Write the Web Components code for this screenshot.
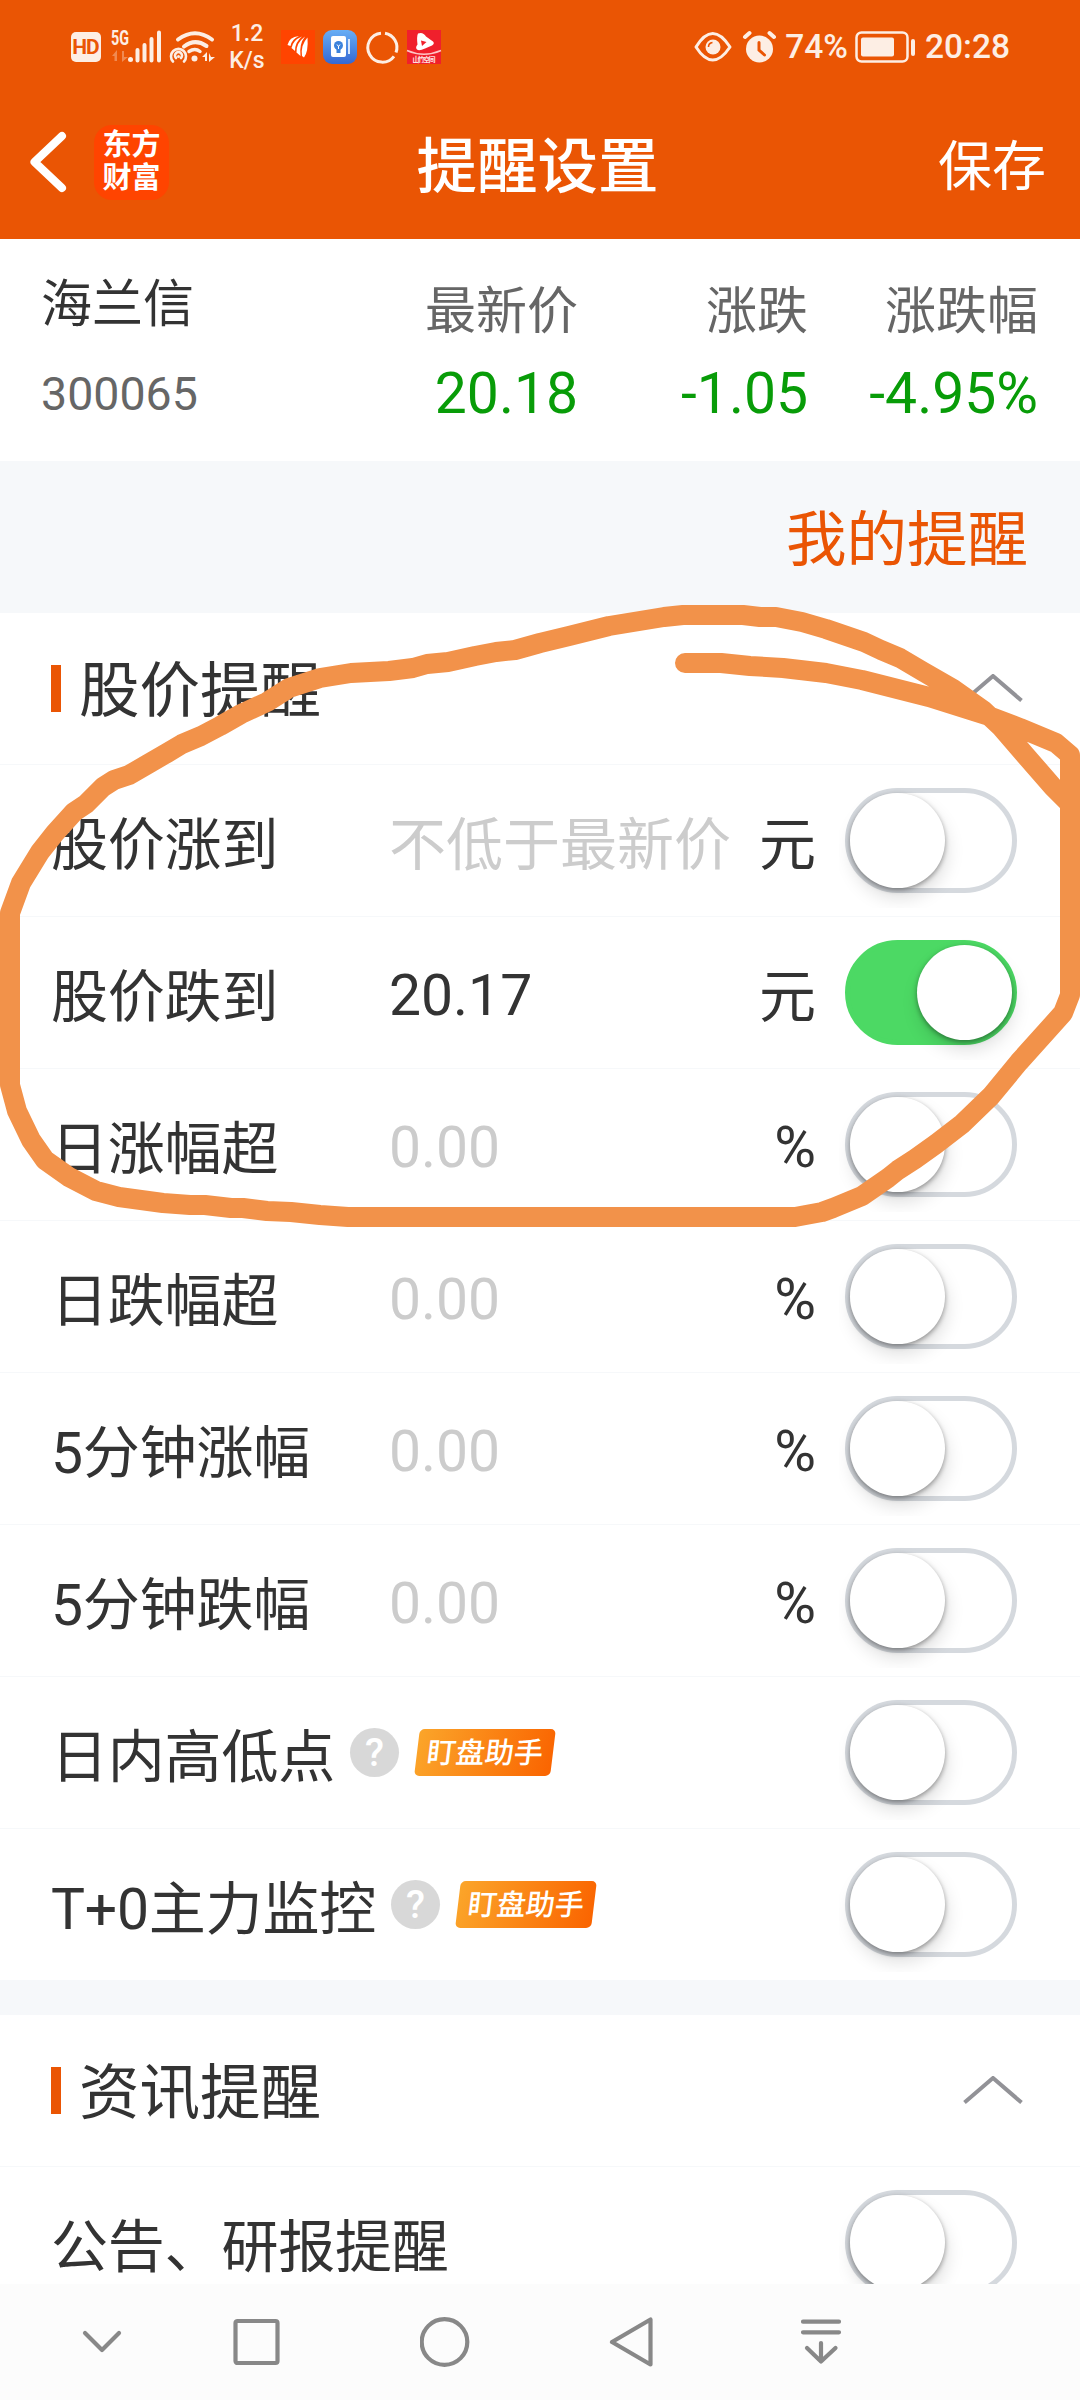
<!DOCTYPE html>
<html lang="zh-CN">
<head>
<meta charset="UTF-8">
<meta name="viewport" content="width=device-width, initial-scale=1.0">
<title>提醒设置</title>
<style>
    html, body {
        margin: 0;
        padding: 0;
    }
    body {
        width: 1080px;
        height: 2400px;
        overflow: hidden;
        background: #ffffff;
        color: #333333;
        font-family: Roboto, "Noto Sans CJK SC", sans-serif;
    }
</style>
</head>
<body>
<alert-app></alert-app>

<script>
class StatusBar extends HTMLElement {
    constructor() {
        super();
        this.attachShadow({ mode: 'open' });
    }

    connectedCallback() {
        this.shadowRoot.innerHTML = `
            <style>
                :host {
                    display: flex;
                    align-items: center;
                    justify-content: space-between;
                    height: 94px;
                    padding: 0 71px;
                    color: #fdeee4;
                    font-size: 33.500px;
                    font-weight: 500;
                    line-height: 1;
                }
                .side { display: flex; align-items: center; }
                svg { display: block; overflow: visible; }
                .hd {
                    width: 30px;
                    height: 30px;
                    border-radius: 5px;
                    background: #fdeee4;
                    color: #ea5504;
                    font-size: 21px;
                    font-weight: 700;
                    line-height: 31px;
                    text-align: center;
                    letter-spacing: -1px;
                    text-indent: -1px;
                }
                .signal { margin-left: 10px; }
                .wifi { margin-left: 9px; }
                .speed {
                    width: 36px;
                    margin-left: 13px;
                    font-size: 23px;
                    line-height: 27px;
                    text-align: center;
                }
                .apps { display: flex; gap: 8px; margin-left: 16px; }
                .alarm { margin: 0 9px 0 11px; }
                .battery { margin: 0 9px 0 7px; }
                .time { margin-right: -1px; }
            </style>
            <div class="side">
                <div class="hd">HD</div>
                <svg class="signal" width="50" height="34" viewBox="0 0 50 34" fill="#fdeee4">
                    <text x="0" y="14.500" font-size="20" font-weight="700" textLength="18" lengthAdjust="spacingAndGlyphs">5G</text>
                    <path d="M6 20v11H3.500v-5H1zM11 32V21h2v6h4z" opacity=".35"/>
                    <circle cx="19.500" cy="29.500" r="2.500"/>
                    <path d="M26.500 20v10.500M33.500 15v15.500M40.500 9v21.500M48 2.500v28" stroke="#fdeee4" stroke-width="4" stroke-linecap="round"/>
                </svg>
                <svg class="wifi" width="46" height="34" viewBox="0 0 46 34" fill="none" stroke="#fdeee4" stroke-linecap="round">
                    <path d="M8 9.500Q25-3 42 9.500" stroke-width="4"/>
                    <path d="M14 16.500Q25 8 36.500 16" stroke-width="4"/>
                    <path d="M19 21.500q6-4 11 0" stroke-width="3.500"/>
                    <path d="M3 31.500a7.500 7.500 0 1 1 11 0M6 28a3.500 3.500 0 1 1 5 0" stroke-width="2.600"/>
                    <circle cx="8.500" cy="26.500" r="1.500" fill="#fdeee4" stroke="none"/>
                    <circle cx="24.500" cy="28.500" r="3" fill="#fdeee4" stroke="none"/>
                    <path d="M37 22v9h-2v-4h-3zM39 32v-9l2 4h4z" fill="#fdeee4" stroke="none"/>
                </svg>
                <div class="speed">1.2 K/s</div>
                <div class="apps">
                    <svg width="34" height="34" viewBox="0 0 34 34">
                        <path fill="#ff4400" d="M0 0h34v34H0z"/>
                        <path fill="#fff" d="M18 6Q8 7 6.500 15l3 1Q10.500 9.500 18 6zM21 6.500Q12 10 10.500 18l3.500 3Q14 12 21 6.500zM24 6.500Q15 13 15.500 22.500l4 3.500Q18 14 24 6.500zM26.500 7.500Q19.500 15 21 26l2 1.500q4.500-6 3.500-20z"/>
                    </svg>
                    <svg width="34" height="34" viewBox="0 0 34 34">
                        <defs><linearGradient id="b" x2="0" y2="1"><stop stop-color="#67aef5"/><stop offset="1" stop-color="#3468d4"/></linearGradient></defs>
                        <rect width="34" height="34" rx="9" fill="url(#b)"/>
                        <rect x="8" y="6" width="15" height="21" rx="2" fill="#fff"/>
                        <path d="M26 9v15" stroke="#d6e6fc" stroke-width="2"/>
                        <circle cx="15.500" cy="15.500" r="4.500" fill="#3b82dc"/>
                        <path d="M13.500 19h4v4h-4z" fill="#3b82dc"/>
                        <path d="M14 14.500l1.500 2 1.500-2M15.500 16v3" fill="none" stroke="#fff"/>
                    </svg>
                    <svg width="34" height="34" viewBox="0 0 34 34" fill="none" stroke="#fdeee4" stroke-width="3">
                        <path d="M19.500 2.700A14.500 14.500 0 0 1 30.500 22M28.500 25.800A14.500 14.500 0 1 1 15.500 2.700" transform="translate(.500 .500)"/>
                    </svg>
                    <svg width="34" height="34" viewBox="0 0 34 34">
                        <path fill="#f0202c" d="M0 0h34v34H0z"/>
                        <path d="M0 20.500Q17 28 34 20.500" fill="none" stroke="#ffc5c5" stroke-width="1.500"/>
                        <path d="M11 3.500q5-2 8 3l7 5q2 2-1 4l-7 3q-6 3-8 1-2-2 .500-5-1-8 .500-11z" fill="#fff"/>
                        <path d="M14 10.500l5.500 1.500-4.500 4z" fill="#f0202c"/>
                        <text x="17" y="31.500" fill="#ffe0e0" font-size="7" font-weight="700" text-anchor="middle" textLength="23">山竹空间</text>
                    </svg>
                </div>
            </div>
            <div class="side">
                <svg width="38" height="30" viewBox="0 0 38 30" fill="none" stroke="#fdeee4" stroke-width="3">
                    <path d="M2 15Q18.500-12 36 15Q18.500 41 2 15z" stroke-linejoin="round"/>
                    <circle cx="19" cy="15" r="7.500" fill="#fdeee4" stroke="none"/>
                    <path d="M14.500 15q0-4 4-4.500" stroke="#ea5504" stroke-width="1.600"/>
                </svg>
                <svg class="alarm" width="33" height="32" viewBox="0 0 33 32" fill="none" stroke-linecap="round">
                    <circle cx="16.500" cy="18" r="13.500" fill="#fdeee4"/>
                    <path d="M2 6l4.500-4M31 6l-4.500-4" stroke="#fdeee4" stroke-width="4"/>
                    <path d="M16 11.500V19l5.500 5" stroke="#ea5504" stroke-width="3"/>
                </svg>
                <span>74%</span>
                <svg class="battery" width="61" height="32" viewBox="0 0 61 32" fill="none">
                    <rect x="1.500" y="1.500" width="51" height="29" rx="5" stroke="#fdeee4" stroke-width="2.500"/>
                    <rect x="6" y="6.500" width="33" height="19" rx="2" fill="#fdeee4"/>
                    <rect x="56" y="8" width="4" height="17" rx="2" fill="#fdeee4"/>
                </svg>
                <span class="time">20:28</span>
            </div>
        `;
    }
}

class AppHeader extends HTMLElement {
    constructor() {
        super();
        this.attachShadow({ mode: 'open' });
    }

    connectedCallback() {
        this.shadowRoot.innerHTML = `
            <style>
                :host {
                    display: block;
                    height: 239px;
                    background: #ea5504;
                    color: #ffffff;
                }
                header {
                    display: grid;
                    grid-template-columns: 1fr auto 1fr;
                    align-items: center;
                    height: 140px;
                    padding: 0 34px 0 29px;
                }
                .left { display: flex; align-items: center; gap: 27px; padding-bottom: 4px; }
                .logo {
                    display: flex;
                    flex-direction: column;
                    justify-content: center;
                    width: 75px;
                    height: 75px;
                    border-radius: 18px;
                    background: #ff4400;
                    font-size: 29px;
                    font-weight: 700;
                    line-height: 33px;
                    text-align: center;
                }
                h1 { margin: 0; font-size: 60.500px; font-weight: 500; line-height: 1; padding-top: 8px; }
                .save { font-size: 54px; line-height: 1; padding-top: 7px; text-align: right; }
            </style>
            <status-bar></status-bar>
            <header>
                <div class="left">
                    <svg width="38" height="64" viewBox="0 0 38 64" fill="none" stroke="#fff" stroke-width="8" stroke-linejoin="round" stroke-linecap="round"><path d="M33 6L5.500 32 33 58"/></svg>
                    <div class="logo"><span>东方</span><span>财富</span></div>
                </div>
                <h1><slot></slot></h1>
                <div class="save"><slot name="action"></slot></div>
            </header>
        `;
    }
}

class StockQuote extends HTMLElement {
    constructor() {
        super();
        this.attachShadow({ mode: 'open' });
    }

    connectedCallback() {
        this.shadowRoot.innerHTML = `
            <style>
                :host {
                    display: grid;
                    box-sizing: border-box;
                    height: 222px;
                    padding: 0 42px 0 41px;
                    grid-template-columns: 307px 230px 230px 230px;
                    grid-template-rows: 75px 60px;
                    row-gap: 16px;
                    align-content: center;
                    align-items: center;
                    text-align: right;
                    font-size: 51px;
                    line-height: 60px;
                    color: #666666;
                    white-space: nowrap;
                }
                .name { text-align: left; color: #333333; padding-bottom: 14px; }
                .code { text-align: left; font-size: 46.500px; padding-bottom: 3px; }
                .num { font-size: 57px; color: #089c08; padding-bottom: 3px; }
            </style>
            <span class="name">${this.getAttribute('name')}</span>
            <span>最新价</span>
            <span>涨跌</span>
            <span>涨跌幅</span>
            <span class="code">${this.getAttribute('code')}</span>
            <span class="num">${this.getAttribute('price')}</span>
            <span class="num">${this.getAttribute('change')}</span>
            <span class="num">${this.getAttribute('percent')}</span>
        `;
    }
}

class AlertSection extends HTMLElement {
    constructor() {
        super();
        this.attachShadow({ mode: 'open' });
    }

    connectedCallback() {
        this.shadowRoot.innerHTML = `
            <style>
                :host { display: block; background: #ffffff; }
                .head {
                    display: flex;
                    align-items: center;
                    box-sizing: border-box;
                    height: 152px;
                    padding: 0 57px 0 51px;
                    border-bottom: 1px solid #f6f8fa;
                }
                .mark { width: 10px; height: 47px; margin-right: 18px; background: #ea5504; }
                h2 { flex: 1; margin: 0; padding-top: 7px; font-size: 60.500px; font-weight: 400; line-height: 1; }
            </style>
            <div class="head">
                <div class="mark"></div>
                <h2>${this.getAttribute('heading')}</h2>
                <svg width="60" height="30" viewBox="0 0 60 30" fill="none" stroke="#929297" stroke-width="4"><path d="M1.500 26.500L30 2l28.500 24.500"/></svg>
            </div>
            <slot></slot>
        `;
    }
}

class ToggleSwitch extends HTMLElement {
    constructor() {
        super();
        this.attachShadow({ mode: 'open' });
    }

    connectedCallback() {
        this.shadowRoot.innerHTML = `
            <style>
                :host {
                    display: flex;
                    box-sizing: border-box;
                    width: 172px;
                    height: 105px;
                    border: 5px solid #d5d9de;
                    border-radius: 53px;
                    clip-path: inset(-10px -14px -15px -6px);
                }
                :host([on]) {
                    justify-content: flex-end;
                    border-color: #4cd964;
                    background: #4cd964;
                }
                .knob {
                    width: 95px;
                    height: 95px;
                    border-radius: 50%;
                    background: #ffffff;
                    box-shadow: 0 2px 5px rgba(0, 0, 0, .38), 2px 10px 18px rgba(0, 0, 0, .13);
                }
            </style>
            <div class="knob"></div>
        `;
        this.addEventListener('click', () => this.toggleAttribute('on'));
    }
}

class AlertRow extends HTMLElement {
    constructor() {
        super();
        this.attachShadow({ mode: 'open' });
    }

    connectedCallback() {
        const value = this.getAttribute('value') || '';
        const hint = this.getAttribute('hint') || '';
        const unit = this.getAttribute('unit') || '';
        const on = this.hasAttribute('on') ? 'on' : '';
        // latin digits sit a little lower in the line box than the hanzi
        const latin = text => /^[\d.%]+$/.test(text) ? 'latin' : '';

        this.shadowRoot.innerHTML = `
            <style>
                :host {
                    display: flex;
                    align-items: center;
                    box-sizing: border-box;
                    height: 152px;
                    padding: 0 63px 0 51px;
                    border-bottom: 1px solid #f6f8fa;
                    font-size: 57px;
                    line-height: 1;
                    white-space: nowrap;
                }
                .label { display: flex; align-items: center; min-width: 338px; }
                .text, .value, .unit { padding-top: 9px; }
                .text { letter-spacing: -0.2px; }
                .latin { padding-top: 6px; }
                .value { flex: 1; }
                .hint { color: #cccccc; }
                .unit { margin-right: 29px; }
            </style>
            <div class="label"><span class="text">${this.getAttribute('label')}</span><slot></slot></div>
            <div class="value ${latin(value || hint)} ${value ? '' : 'hint'}">${value || hint}</div>
            <div class="unit ${latin(unit)}">${unit}</div>
            <toggle-switch ${on}></toggle-switch>
        `;
    }
}

class HelperTag extends HTMLElement {
    constructor() {
        super();
        this.attachShadow({ mode: 'open' });
    }

    connectedCallback() {
        this.shadowRoot.innerHTML = `
            <style>
                :host { display: flex; align-items: center; gap: 18px; margin-left: 15px; }
                .help {
                    width: 49px;
                    height: 49px;
                    border-radius: 50%;
                    background: #d8d8d8;
                    color: #ffffff;
                    font-size: 39px;
                    font-weight: 500;
                    line-height: 50px;
                    text-align: center;
                }
                .tag {
                    width: 136px;
                    height: 47px;
                    border-radius: 5px;
                    background: linear-gradient(100deg, #fba52a, #fa6400);
                    color: #ffffff;
                    font-size: 29px;
                    font-weight: 500;
                    line-height: 49px;
                    text-align: center;
                    transform: skewX(-7deg);
                }
            </style>
            <div class="help">?</div>
            <div class="tag"><slot></slot></div>
        `;
    }
}

class NavBar extends HTMLElement {
    constructor() {
        super();
        this.attachShadow({ mode: 'open' });
    }

    connectedCallback() {
        this.shadowRoot.innerHTML = `
            <style>
                :host {
                    display: flex;
                    align-items: center;
                    gap: 138px;
                    box-sizing: border-box;
                    height: 116px;
                    padding-left: 77px;
                    background: #fcfcfc;
                }
                svg {
                    width: 50px;
                    height: 50px;
                    fill: none;
                    stroke: #888888;
                    stroke-width: 4.2;
                    stroke-linejoin: round;
                    stroke-linecap: round;
                }
                .down { margin-right: -33px; }
            </style>
            <svg class="down" viewBox="0 0 50 50"><path d="M8 16l17 17 17-17"/></svg>
            <svg viewBox="0 0 50 50"><rect x="3.500" y="4" width="42" height="42" rx="2"/></svg>
            <svg viewBox="0 0 50 50"><circle cx="24.500" cy="25" r="22.800"/></svg>
            <svg viewBox="0 0 50 50"><path d="M42.500 2.500v45L4 25z"/></svg>
            <svg viewBox="0 0 50 50"><path d="M7 4.700h36M7 15.300h36M25 26v18M11 31l14 13.500L39.500 31"/></svg>
        `;
    }
}

// freehand loop drawn over the page
class InkOverlay extends HTMLElement {
    constructor() {
        super();
        this.attachShadow({ mode: 'open' });
    }

    connectedCallback() {
        this.shadowRoot.innerHTML = `
            <style>
                :host { display: block; position: absolute; inset: 0; pointer-events: none; }
                svg { display: block; }
            </style>
            <svg width="1080" height="2400" viewBox="0 0 1080 2400" fill="none" stroke="#f2924a" stroke-width="20" stroke-linecap="round" stroke-linejoin="round">
                <path d="M685 663L721 663 750 666 783 668 826 673 862 680 929 697 986 715 1020 728 1056 743 1070 755V995L1063 1013 1019 1062 991 1096 962 1124 936 1144 915 1159 898 1170 888 1178 862 1196 833 1208 822 1212 795 1217H348L320 1215 291 1212 267 1211 243 1208 231 1208 205 1205 190 1205 163 1203 119 1197 96 1191 69 1177 45 1160 31 1140 17 1111 10 1085V913L21 883 40 852 55 833 74 812 86 804 103 787 114 780 129 775 148 764 167 753 182 744 201 736 220 726 241 714 267 702 289 688 320 678 351 673 389 671 413 668 427 664 448 662 475 656 496 652 515 650 540 643 569 636 609 626 664 617 683 615H743L760 617 776 617 802 622 826 629 864 642 881 650 900 658 922 671 953 689 984 711 1001 727 1026 756 1053 787 1070 804"/>
            </svg>
        `;
    }
}

class AlertApp extends HTMLElement {
    constructor() {
        super();
        this.attachShadow({ mode: 'open' });
    }

    connectedCallback() {
        this.shadowRoot.innerHTML = `
            <style>
                :host {
                    display: flex;
                    flex-direction: column;
                    position: relative;
                    width: 1080px;
                    height: 2400px;
                    overflow: hidden;
                }
                main { flex: 1; min-height: 0; overflow: hidden; }
                .mine {
                    display: flex;
                    align-items: center;
                    justify-content: flex-end;
                    box-sizing: border-box;
                    height: 152px;
                    padding: 9px 52px 0 0;
                    background: #f6f8fa;
                    color: #ea5504;
                    font-size: 60.500px;
                    line-height: 1;
                }
                .gap { height: 34px; background: #f6f8fa; }
            </style>
            <app-header>提醒设置<span slot="action">保存</span></app-header>
            <main>
                <stock-quote name="海兰信" code="300065" price="20.18" change="-1.05" percent="-4.95%"></stock-quote>
                <div class="mine">我的提醒</div>
                <alert-section heading="股价提醒">
                    <alert-row label="股价涨到" hint="不低于最新价" unit="元"></alert-row>
                    <alert-row label="股价跌到" value="20.17" unit="元" on></alert-row>
                    <alert-row label="日涨幅超" hint="0.00" unit="%"></alert-row>
                    <alert-row label="日跌幅超" hint="0.00" unit="%"></alert-row>
                    <alert-row label="5分钟涨幅" hint="0.00" unit="%"></alert-row>
                    <alert-row label="5分钟跌幅" hint="0.00" unit="%"></alert-row>
                    <alert-row label="日内高低点"><helper-tag>盯盘助手</helper-tag></alert-row>
                    <alert-row label="T+0主力监控"><helper-tag>盯盘助手</helper-tag></alert-row>
                </alert-section>
                <div class="gap"></div>
                <alert-section heading="资讯提醒">
                    <alert-row label="公告、研报提醒"></alert-row>
                </alert-section>
            </main>
            <nav-bar></nav-bar>
            <ink-overlay></ink-overlay>
        `;
    }
}

customElements.define('status-bar', StatusBar);
customElements.define('app-header', AppHeader);
customElements.define('stock-quote', StockQuote);
customElements.define('toggle-switch', ToggleSwitch);
customElements.define('helper-tag', HelperTag);
customElements.define('alert-row', AlertRow);
customElements.define('alert-section', AlertSection);
customElements.define('nav-bar', NavBar);
customElements.define('ink-overlay', InkOverlay);
customElements.define('alert-app', AlertApp);
</script>
</body>
</html>
